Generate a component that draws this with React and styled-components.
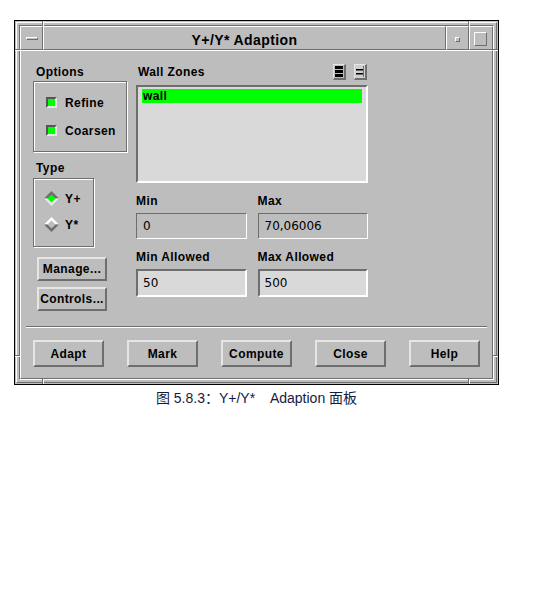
import React from "react";
import styled, { createGlobalStyle, css } from "styled-components";

const C = {
  face: "#bdbdbd",
  light: "#ffffff",
  soft: "#e6e6e6",
  dark: "#6e6e6e",
  field: "#d9d9d9",
  green: "#00ff00",
};

const UI_FONT = `"Liberation Sans", Arial, sans-serif`;

const GlobalStyle = createGlobalStyle`
  html, body { margin: 0; padding: 0; background: #fff; }
  body { font-family: ${UI_FONT}; }
`;

const raised = (w = 1, hi = C.light) => css`
  border-style: solid;
  border-width: ${w}px;
  border-color: ${hi} ${C.dark} ${C.dark} ${hi};
`;

const sunken = (w = 1) => css`
  border-style: solid;
  border-width: ${w}px;
  border-color: ${C.dark} ${C.light} ${C.light} ${C.dark};
`;

const boldText = css`
  font: bold 12px/14px ${UI_FONT};
  letter-spacing: 0.4px;
  color: #000;
  white-space: nowrap;
`;

const Page = styled.div`
  padding: 20px 0 0 14px;
  width: 485px;
`;

const Window = styled.div`
  position: relative;
  width: 485px;
  box-sizing: border-box;
  border: 1px solid #000;
  padding: 1px;
  background: ${C.face};
`;

const Frame = styled.div`
  ${raised(1)};
  padding: 2px;
`;

const Inner = styled.div`
  ${sunken(1)};
`;

/* resize-handle notches cut into the window frame */
const Notch = styled.span`
  position: absolute;
  box-sizing: border-box;
  ${(p) =>
    p.$axis === "v"
      ? css`
          width: 2px;
          height: 5px;
          border-left: 1px solid ${C.dark};
          border-right: 1px solid ${C.light};
          left: ${p.$at}px;
          ${p.$edge}: 0;
        `
      : css`
          height: 2px;
          width: 5px;
          border-top: 1px solid ${C.dark};
          border-bottom: 1px solid ${C.light};
          top: ${p.$at}px;
          ${p.$edge}: 0;
        `}
`;

const TitleBar = styled.div`
  display: flex;
  height: 24px;
`;

const TitleCell = styled.div`
  box-sizing: border-box;
  ${raised(1)};
  display: flex;
  align-items: center;
  justify-content: center;
  width: ${(p) => (p.$w ? `${p.$w}px` : "auto")};
  flex: ${(p) => (p.$w ? "none" : "1")};
`;

const TitleText = styled.span`
  font: bold 14px/16px ${UI_FONT};
  letter-spacing: 0.4px;
  color: #000;
  padding-top: 3px;
`;

const MenuGlyph = styled.span`
  width: 10px;
  height: 1px;
  ${raised(1)};
  margin-top: 1px;
`;

const MinGlyph = styled.span`
  width: 3px;
  height: 3px;
  ${raised(1)};
  margin-top: 2px;
`;

const MaxGlyph = styled.span`
  width: 11px;
  height: 12px;
  ${raised(1)};
  margin-top: 1px;
  margin-left: -1px;
`;

const Client = styled.div`
  ${raised(1)};
  padding: 13px 12px 11px;
  display: flex;
  flex-direction: column;
`;

const Panels = styled.div`
  display: flex;
  gap: 9px;
  height: 247px;
`;

const LeftCol = styled.div`
  width: 94px;
  padding-top: 1px;
  display: flex;
  flex-direction: column;
  align-items: flex-start;
`;

const RightCol = styled.div`
  width: 232px;
  display: flex;
  flex-direction: column;
`;

const Label = styled.div`
  ${boldText};
  margin-top: ${(p) => p.$mt || 0}px;
  margin-bottom: ${(p) => p.$mb ?? 0}px;
  padding-left: ${(p) => p.$pl || 0}px;
`;

const GroupBox = styled.div`
  box-sizing: border-box;
  width: ${(p) => p.$w}px;
  height: ${(p) => p.$h}px;
  border: 1px solid ${C.dark};
  box-shadow: 1px 1px 0 ${C.light}, inset 1px 1px 0 ${C.light};
  padding: ${(p) => p.$pad};
  display: flex;
  flex-direction: column;
  gap: ${(p) => p.$gap}px;
`;

const OptionRow = styled.div`
  ${boldText};
  display: flex;
  align-items: center;
  gap: ${(p) => p.$gap}px;
  height: ${(p) => p.$h}px;
`;

const CheckMark = styled.span`
  box-sizing: border-box;
  width: 11px;
  height: 11px;
  flex: none;
  border-style: solid;
  border-width: 2px;
  border-color: #555 ${C.soft} ${C.soft} #555;
  background: ${(p) => (p.$on ? C.green : C.face)};
`;

const PushButton = styled.div`
  ${boldText};
  box-sizing: border-box;
  width: ${(p) => p.$w}px;
  height: ${(p) => p.$h}px;
  margin-top: ${(p) => p.$mt || 0}px;
  margin-left: ${(p) => p.$ml || 0}px;
  ${raised(2, C.soft)};
  background: ${C.face};
  display: flex;
  align-items: center;
  justify-content: center;
`;

const HeaderRow = styled.div`
  height: 16px;
  display: flex;
  align-items: center;
  justify-content: space-between;
`;

const IconGroup = styled.div`
  display: flex;
  gap: 8px;
  margin-right: 1px;
`;

const IconButton = styled.div`
  box-sizing: border-box;
  width: 13px;
  height: 16px;
  border-style: solid;
  border-width: 1px 2px 2px 1px;
  border-color: ${C.soft} ${C.dark} ${C.dark} ${C.soft};
  background: ${(p) => p.$bg};
  display: flex;
`;

const ListBox = styled.div`
  box-sizing: border-box;
  margin-top: 5px;
  height: 98px;
  ${sunken(2)};
  background: ${C.field};
  padding: 2px 4px;
`;

const ListItem = styled.div`
  ${boldText};
  line-height: 15px;
  height: 14px;
  background: ${(p) => (p.$selected ? C.green : "transparent")};
  padding-left: 1px;
`;

const FieldGrid = styled.div`
  margin-top: 11px;
  display: grid;
  grid-template-columns: 1fr 1fr;
  column-gap: 11px;
  row-gap: 11px;
`;

const FieldGroup = styled.div`
  display: flex;
  flex-direction: column;
`;

const Field = styled.div`
  box-sizing: border-box;
  height: ${(p) => (p.$editable ? 28 : 26)}px;
  ${(p) => sunken(p.$editable ? 2 : 1)};
  background: ${(p) => (p.$editable ? C.field : C.face)};
  padding-left: ${(p) => (p.$editable ? 5 : 6)}px;
  display: flex;
  align-items: center;
  font: 12px/14px "DejaVu Sans", sans-serif;
  color: #000;
`;

const Separator = styled.div`
  margin: 15px -7px 0;
  border-top: 1px solid ${C.dark};
  border-bottom: 1px solid ${C.light};
`;

const ButtonRow = styled.div`
  margin-top: 12px;
  display: flex;
  justify-content: space-between;
`;

const Caption = styled.div`
  margin-top: 5px;
  width: 485px;
  text-align: center;
  white-space: pre;
  font: 14px/16px "Liberation Sans", Arial, "Noto Sans CJK SC", sans-serif;
  color: #151a40;
`;

function Diamond({ on }) {
  return (
    <svg width="15" height="15" viewBox="0 0 15 15">
      <polygon points="7.5,0 15,7.5 0,7.5" fill={on ? C.dark : C.light} />
      <polygon points="0,7.5 15,7.5 7.5,15" fill={on ? C.soft : C.dark} />
      <polygon points="7.5,3.5 11.5,7.5 7.5,11.5 3.5,7.5" fill={on ? C.green : C.face} />
    </svg>
  );
}

function SelectAllGlyph() {
  return (
    <svg width="10" height="13" viewBox="0 0 10 13">
      <rect x="1" y="1" width="8" height="3" fill="#000" />
      <rect x="1" y="5" width="8" height="3" fill="#000" />
      <rect x="1" y="9" width="8" height="3" fill="#000" />
    </svg>
  );
}

function DeselectAllGlyph() {
  return (
    <svg width="10" height="13" viewBox="0 0 10 13">
      <rect x="1" y="4" width="8" height="1.5" fill="#000" />
      <rect x="1" y="8" width="8" height="1.5" fill="#000" />
      <rect x="8" y="1" width="1" height="11" fill={C.dark} />
    </svg>
  );
}

const bottomButtons = ["Adapt", "Mark", "Compute", "Close", "Help"];

export default function App() {
  return (
    <>
      <GlobalStyle />
      <Page>
        <Window>
          <Notch $axis="v" $edge="top" $at={27} />
          <Notch $axis="v" $edge="top" $at={453} />
          <Notch $axis="v" $edge="bottom" $at={27} />
          <Notch $axis="v" $edge="bottom" $at={453} />
          <Notch $axis="h" $edge="left" $at={28} />
          <Notch $axis="h" $edge="right" $at={28} />
          <Notch $axis="h" $edge="left" $at={334} />
          <Notch $axis="h" $edge="right" $at={334} />
          <Frame>
            <Inner>
              <TitleBar>
                <TitleCell $w={23}>
                  <MenuGlyph />
                </TitleCell>
                <TitleCell>
                  <TitleText>Y+/Y* Adaption</TitleText>
                </TitleCell>
                <TitleCell $w={23}>
                  <MinGlyph />
                </TitleCell>
                <TitleCell $w={24}>
                  <MaxGlyph />
                </TitleCell>
              </TitleBar>
              <Client>
                <Panels>
                  <LeftCol>
                    <Label $pl={3} $mb={2}>Options</Label>
                    <GroupBox $w={94} $h={71} $pad="15px 0 0 12px" $gap={17}>
                      <OptionRow $gap={8} $h={11}>
                        <CheckMark $on />
                        Refine
                      </OptionRow>
                      <OptionRow $gap={8} $h={11}>
                        <CheckMark $on />
                        Coarsen
                      </OptionRow>
                    </GroupBox>
                    <Label $pl={3} $mt={9} $mb={3}>Type</Label>
                    <GroupBox $w={61} $h={69} $pad="12px 0 0 10px" $gap={11}>
                      <OptionRow $gap={6} $h={15}>
                        <Diamond on />
                        Y+
                      </OptionRow>
                      <OptionRow $gap={6} $h={15}>
                        <Diamond />
                        Y*
                      </OptionRow>
                    </GroupBox>
                    <PushButton $w={70} $h={24} $mt={10} $ml={4}>
                      Manage...
                    </PushButton>
                    <PushButton $w={70} $h={24} $mt={6} $ml={4}>
                      Controls...
                    </PushButton>
                  </LeftCol>
                  <RightCol>
                    <HeaderRow>
                      <Label $pl={2}>Wall Zones</Label>
                      <IconGroup>
                        <IconButton $bg={C.face}>
                          <SelectAllGlyph />
                        </IconButton>
                        <IconButton $bg="#cfcfcf">
                          <DeselectAllGlyph />
                        </IconButton>
                      </IconGroup>
                    </HeaderRow>
                    <ListBox>
                      <ListItem $selected>wall</ListItem>
                    </ListBox>
                    <FieldGrid>
                      <FieldGroup>
                        <Label $mb={5}>Min</Label>
                        <Field>0</Field>
                      </FieldGroup>
                      <FieldGroup>
                        <Label $mb={5}>Max</Label>
                        <Field>70,06006</Field>
                      </FieldGroup>
                      <FieldGroup>
                        <Label $mb={5}>Min Allowed</Label>
                        <Field $editable>50</Field>
                      </FieldGroup>
                      <FieldGroup>
                        <Label $mb={5}>Max Allowed</Label>
                        <Field $editable>500</Field>
                      </FieldGroup>
                    </FieldGrid>
                  </RightCol>
                </Panels>
                <Separator />
                <ButtonRow>
                  {bottomButtons.map((b) => (
                    <PushButton key={b} $w={71} $h={27}>
                      {b}
                    </PushButton>
                  ))}
                </ButtonRow>
              </Client>
            </Inner>
          </Frame>
        </Window>
        <Caption>{"图 5.8.3：Y+/Y*    Adaption 面板"}</Caption>
      </Page>
    </>
  );
}
